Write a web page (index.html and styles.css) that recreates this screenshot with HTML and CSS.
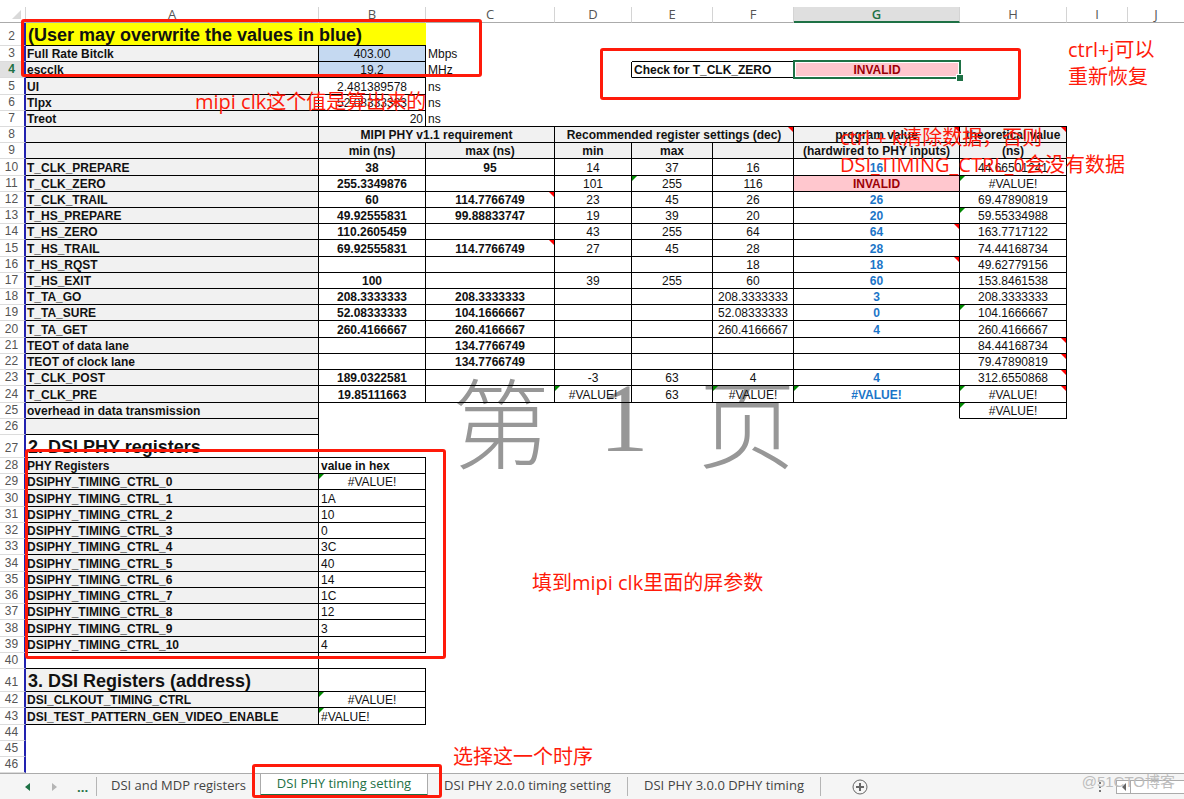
FILE: index.html
```html
<!DOCTYPE html>
<html lang="zh-CN">
<head>
<meta charset="utf-8">
<title>DSI PHY timing setting</title>
<link rel="stylesheet" href="styles.css">
</head>
<body>
<main class="sheet">
<div class="watermark"><span>第</span><span class="num">1</span><span>页</span></div>
<table class="cells">
<colgroup><col class="c-n"><col class="c-a"><col class="c-b"><col class="c-c"><col class="c-d"><col class="c-e"><col class="c-e"><col class="c-g"><col class="c-b"><col class="c-i"><col></colgroup>
<thead>
<tr><th class="corner"></th><th>A</th><th>B</th><th>C</th><th>D</th><th>E</th><th>F</th><th class="picked">G</th><th>H</th><th>I</th><th class="last">J</th></tr>
</thead>
<tbody>
<tr class="big"><th>2</th><td class="title yellow bt" colspan="2">(User may overwrite the values in blue)</td></tr>
<tr><th>3</th><td class="l rb">Full Rate Bitclk</td><td class="blue rb">403.00</td><td class="left">Mbps</td><td></td><td class="bt"></td><td class="bt"></td></tr>
<tr><th class="picked">4</th><td class="l rb">escclk</td><td class="blue rb">19.2</td><td class="left">MHz</td><td class="r"></td><td class="left b rb" colspan="2">Check for T_CLK_ZERO</td><td class="bad selected">INVALID</td></tr>
<tr class="tall"><th>5</th><td class="l rb">UI</td><td class="rb">2.481389578</td><td class="left">ns</td></tr>
<tr><th>6</th><td class="l rb">Tlpx</td><td class="rb">52.08333333</td><td class="left">ns</td></tr>
<tr><th>7</th><td class="l rb">Treot</td><td class="right rb">20</td><td class="left bt">ns</td><td class="bt"></td><td class="bt"></td><td class="bt"></td><td class="bt"></td><td class="bt"></td></tr>
<tr class="grid head"><th>8</th><td></td><td colspan="2">MIPI PHY v1.1 requirement</td><td class="note" colspan="3">Recommended register settings (dec)</td><td class="note">program value</td><td class="note">theoretical value</td></tr>
<tr class="grid head"><th>9</th><td></td><td>min (ns)</td><td>max (ns)</td><td>min</td><td>max</td><td></td><td>(hardwired to PHY inputs)</td><td>(ns)</td></tr>
<tr class="grid tall"><th>10</th><td class="l">T_CLK_PREPARE</td><td class="b">38</td><td class="b">95</td><td>14</td><td>37</td><td>16</td><td class="prog">16</td><td>44.66501241</td></tr>
<tr class="grid"><th>11</th><td class="l">T_CLK_ZERO</td><td class="b">255.3349876</td><td></td><td>101</td><td class="err">255</td><td>116</td><td class="bad">INVALID</td><td class="err">#VALUE!</td></tr>
<tr class="grid"><th>12</th><td class="l">T_CLK_TRAIL</td><td class="b">60</td><td class="b note">114.7766749</td><td>23</td><td>45</td><td>26</td><td class="prog">26</td><td>69.47890819</td></tr>
<tr class="grid"><th>13</th><td class="l">T_HS_PREPARE</td><td class="b">49.92555831</td><td class="b">99.88833747</td><td>19</td><td>39</td><td>20</td><td class="prog">20</td><td class="err">59.55334988</td></tr>
<tr class="grid"><th>14</th><td class="l">T_HS_ZERO</td><td class="b">110.2605459</td><td></td><td>43</td><td>255</td><td>64</td><td class="prog note">64</td><td>163.7717122</td></tr>
<tr class="grid tall"><th>15</th><td class="l">T_HS_TRAIL</td><td class="b">69.92555831</td><td class="b note">114.7766749</td><td>27</td><td>45</td><td>28</td><td class="prog">28</td><td>74.44168734</td></tr>
<tr class="grid"><th>16</th><td class="l">T_HS_RQST</td><td></td><td></td><td></td><td></td><td>18</td><td class="prog note">18</td><td>49.62779156</td></tr>
<tr class="grid"><th>17</th><td class="l">T_HS_EXIT</td><td class="b">100</td><td></td><td>39</td><td>255</td><td>60</td><td class="prog">60</td><td>153.8461538</td></tr>
<tr class="grid"><th>18</th><td class="l">T_TA_GO</td><td class="b">208.3333333</td><td class="b">208.3333333</td><td></td><td></td><td>208.3333333</td><td class="prog">3</td><td>208.3333333</td></tr>
<tr class="grid"><th>19</th><td class="l">T_TA_SURE</td><td class="b">52.08333333</td><td class="b">104.1666667</td><td></td><td></td><td>52.08333333</td><td class="prog">0</td><td class="err">104.1666667</td></tr>
<tr class="grid tall"><th>20</th><td class="l">T_TA_GET</td><td class="b">260.4166667</td><td class="b">260.4166667</td><td></td><td></td><td>260.4166667</td><td class="prog">4</td><td>260.4166667</td></tr>
<tr class="grid"><th>21</th><td class="l">TEOT of data lane</td><td></td><td class="b">134.7766749</td><td></td><td></td><td></td><td></td><td class="note">84.44168734</td></tr>
<tr class="grid"><th>22</th><td class="l">TEOT of clock lane</td><td></td><td class="b">134.7766749</td><td></td><td></td><td></td><td></td><td class="note">79.47890819</td></tr>
<tr class="grid"><th>23</th><td class="l">T_CLK_POST</td><td class="b">189.0322581</td><td></td><td>-3</td><td>63</td><td>4</td><td class="prog">4</td><td class="note">312.6550868</td></tr>
<tr class="grid tall"><th>24</th><td class="l">T_CLK_PRE</td><td class="b">19.85111663</td><td></td><td class="err">#VALUE!</td><td>63</td><td class="err">#VALUE!</td><td class="prog err">#VALUE!</td><td class="err note">#VALUE!</td></tr>
<tr><th>25</th><td class="l rb">overhead in data transmission</td><td></td><td></td><td></td><td></td><td></td><td class="r"></td><td class="err rb">#VALUE!</td></tr>
<tr><th>26</th><td class="l rb"></td></tr>
<tr class="big"><th>27</th><td class="title rb">2. DSI PHY registers</td><td class="bt"></td></tr>
<tr class="grid"><th>28</th><td class="l">PHY Registers</td><td class="b left">value in hex</td></tr>
<tr class="grid"><th>29</th><td class="l">DSIPHY_TIMING_CTRL_0</td><td class="err">#VALUE!</td></tr>
<tr class="grid tall"><th>30</th><td class="l">DSIPHY_TIMING_CTRL_1</td><td class="left">1A</td></tr>
<tr class="grid"><th>31</th><td class="l">DSIPHY_TIMING_CTRL_2</td><td class="left">10</td></tr>
<tr class="grid"><th>32</th><td class="l">DSIPHY_TIMING_CTRL_3</td><td class="left">0</td></tr>
<tr class="grid"><th>33</th><td class="l">DSIPHY_TIMING_CTRL_4</td><td class="left">3C</td></tr>
<tr class="grid tall"><th>34</th><td class="l">DSIPHY_TIMING_CTRL_5</td><td class="left">40</td></tr>
<tr class="grid"><th>35</th><td class="l">DSIPHY_TIMING_CTRL_6</td><td class="left">14</td></tr>
<tr class="grid"><th>36</th><td class="l">DSIPHY_TIMING_CTRL_7</td><td class="left">1C</td></tr>
<tr class="grid"><th>37</th><td class="l">DSIPHY_TIMING_CTRL_8</td><td class="left">12</td></tr>
<tr class="grid tall"><th>38</th><td class="l">DSIPHY_TIMING_CTRL_9</td><td class="left">3</td></tr>
<tr class="grid"><th>39</th><td class="l">DSIPHY_TIMING_CTRL_10</td><td class="left">4</td></tr>
<tr><th>40</th><td class="rb"></td><td class="bt"></td></tr>
<tr class="grid big"><th>41</th><td class="l title">3. DSI Registers (address)</td><td></td></tr>
<tr class="grid"><th>42</th><td class="l">DSI_CLKOUT_TIMING_CTRL</td><td class="err">#VALUE!</td></tr>
<tr class="grid tall"><th>43</th><td class="l">DSI_TEST_PATTERN_GEN_VIDEO_ENABLE</td><td class="left err">#VALUE!</td></tr>
<tr><th>44</th><td></td></tr>
<tr><th>45</th><td></td></tr>
<tr><th>46</th><td></td></tr>
</tbody>
</table>
</main>
<nav class="tabs">
<div class="scrollers">
<button type="button" aria-label="Previous sheet"><svg width="5" height="8" viewBox="0 0 5 8"><path d="M5 0v8L0 4z" fill="#1e7145"/></svg></button>
<button type="button" aria-label="Next sheet"><svg width="5" height="8" viewBox="0 0 5 8"><path d="M0 0v8l5-4z" fill="#b5b5b5"/></svg></button>
<button type="button" class="more">...</button>
</div>
<button type="button" class="tab first">DSI and MDP registers</button>
<button type="button" class="tab active">DSI PHY timing setting</button>
<button type="button" class="tab second">DSI PHY 2.0.0 timing setting</button>
<button type="button" class="tab third">DSI PHY 3.0.0 DPHY timing</button>
<button type="button" class="add" aria-label="New sheet"><svg width="16" height="16" viewBox="0 0 16 16" fill="none" stroke="#666"><circle cx="8" cy="8" r="7"/><path d="M8 4v8M4 8h8" stroke-width="2"/></svg></button>
<div class="hscroll">
<svg class="grip" width="2" height="10" viewBox="0 0 2 10" fill="#777"><path d="M0 0h2v2H0zM0 4h2v2H0zM0 8h2v2H0z"/></svg>
<div class="track"><button type="button" aria-label="Scroll left"><svg width="4" height="8" viewBox="0 0 4 8"><path d="M4 0v8L0 4z" fill="#666"/></svg></button></div>
</div>
</nav>
<div class="box box-input"></div>
<div class="box box-check"></div>
<div class="box box-regs"></div>
<div class="box box-tab"></div>
<p class="mark mark-clk">mipi clk这个值是算出来的</p>
<p class="mark mark-restore">ctrl+j可以<br>重新恢复</p>
<p class="mark mark-clear">ctrl + k清除数据，否则<br>DSI_TIMING_CTRL_0会没有数据</p>
<p class="mark mark-fill">填到mipi clk里面的屏参数</p>
<p class="mark mark-pick">选择这一个时序</p>
<p class="credit">@51CTO博客</p>
</body>
</html>
```
FILE: styles.css
```css
* { box-sizing: border-box; }
body {
  position: relative;
  display: flex;
  flex-direction: column;
  min-height: 100vh;
  margin: 0;
  overflow-x: hidden;
  background: #fff;
  color: #111;
  font: 12px/15px "Liberation Sans", Arial, sans-serif;
}
button { padding: 0; border: 0; background: none; font: inherit; color: inherit; }
svg { display: block; }

.sheet { position: relative; flex: 1; padding-top: 7px; }
.cells { position: relative; width: 100%; table-layout: fixed; border-collapse: separate; border-spacing: 0; }
.c-n { width: 26px; }
.c-a { width: 293px; }
.c-b { width: 107px; }
.c-c { width: 129px; }
.c-d { width: 77px; }
.c-e { width: 81px; }
.c-g { width: 166px; }
.c-i { width: 61px; }

.cells tr { height: 16px; }
.cells tr.tall { height: 17px; }
.cells tr.big { height: 23px; }
.cells th, .cells td { position: relative; padding: 0; text-align: center; white-space: nowrap; vertical-align: middle; }
.cells td { padding-top: 2px; border-bottom: 1px solid transparent; line-height: 13px; }
.cells th { color: #555; font-weight: 400; }
.cells thead th { border-right: 1px solid #d4d4d4; border-bottom: 1px solid #ababab; font: 13px/15px "Open Sans", sans-serif; }
.cells thead th.last { border-right: 0; }
.cells tbody th { padding-right: 1px; border-right: 2px solid #2222b0; border-bottom: 1px solid #dcdcdc; }
.cells tr.big th { vertical-align: bottom; line-height: 17px; }
.cells thead th.picked { border-bottom: 2px solid #1e7145; background: #dfdfdf; color: #1e7145; font-weight: 600; line-height: 14px; }
.cells tbody th.picked { background: #e1e1e1; color: #1e7145; font-weight: 700; }
.corner::after {
  content: "";
  position: absolute;
  right: 4px;
  bottom: 3px;
  border-left: 9px solid transparent;
  border-bottom: 9px solid #d9d9d9;
}

.cells .rb, .cells .grid td { border-right: 1px solid #000; border-bottom: 1px solid #000; }
.cells .r { border-right: 1px solid #000; }
.cells .bt { border-bottom: 1px solid #000; }
.cells .l { padding-left: 1px; background: #f1f1f1; font-weight: 700; text-align: left; }
.cells .left { padding-left: 2px; text-align: left; }
.cells .right { padding-right: 2px; text-align: right; }
.b, .head td { font-weight: 700; }
.head td { background: #f1f1f1; }
.cells .title { padding-left: 2px; font-size: 18px; font-weight: 700; line-height: 20px; text-align: left; }
.yellow { background: #ff0; }
.blue { background: #c5d9f1; }
.prog { color: #1b75c8; font-weight: 700; }
.bad { background: #ffc7ce; color: #9c0006; font-weight: 700; }
.note::after {
  content: "";
  position: absolute;
  top: 0;
  right: 0;
  border-top: 5px solid #f00;
  border-left: 5px solid transparent;
}
.err::before {
  content: "";
  position: absolute;
  top: 0;
  left: 0;
  border-top: 5px solid #080;
  border-right: 5px solid transparent;
}
.selected::before {
  content: "";
  position: absolute;
  inset: -2px -1px;
  border: 2px solid #1e7145;
  box-shadow: inset 0 0 0 1px #fff;
}
.selected::after {
  content: "";
  position: absolute;
  right: -3px;
  bottom: -4px;
  width: 6px;
  height: 6px;
  border: 1px solid #fff;
  border-width: 1px 0 0 1px;
  background: #1e7145;
}

.watermark {
  position: absolute;
  top: 358px;
  left: 452px;
  display: flex;
  justify-content: space-between;
  width: 344px;
  color: #979797;
  font: 300 98px/120px "Noto Sans CJK SC", sans-serif;
}
.num { font-family: "Liberation Serif", serif; }

.tabs {
  display: flex;
  align-items: stretch;
  height: 26px;
  border-top: 1px solid #ababab;
  background: #f5f5f5;
  color: #444;
  font: 13px/22px "Open Sans", "Noto Sans", sans-serif;
}
.scrollers { display: flex; align-items: center; gap: 22px; width: 97px; margin: 3px 0; padding-left: 25px; border-right: 1px solid #b5b5b5; }
.more { margin-left: -2px; color: #1e7145; font-weight: 700; }
.tab { padding-bottom: 4px; line-height: 16px; }
.first { width: 163px; margin: 3px 0; }
.active { width: 168px; margin-bottom: 3px; padding-bottom: 2px; border: 1px solid #ababab; border-width: 0 1px 2px; border-bottom-color: #1e7145; background: #fff; color: #1e7145; }
.second { width: 200px; margin: 3px 0; border-right: 1px solid #b5b5b5; }
.third { width: 193px; margin: 3px 0; border-right: 1px solid #b5b5b5; }
.add { display: flex; align-items: center; margin-left: 31px; }
.hscroll { display: flex; align-items: center; gap: 15px; margin-left: auto; }
.track { width: 68px; height: 14px; border: 1px solid #ababab; border-right: 0; background: #fff; }
.track button { display: flex; align-items: center; justify-content: center; width: 14px; height: 12px; border-right: 1px solid #ababab; }

.box { position: absolute; border: 3px solid #ff1a0a; border-radius: 3px; pointer-events: none; }
.box-input { top: 19px; left: 21px; width: 461px; height: 58px; }
.box-check { top: 48px; left: 600px; width: 421px; height: 52px; }
.box-regs { top: 449px; left: 25px; width: 421px; height: 210px; }
.box-tab { top: 764px; left: 252px; width: 190px; height: 34px; }
.mark { position: absolute; margin: 0; color: #ff1a0a; font: 400 20px/27px "Open Sans", "Noto Sans CJK SC", sans-serif; white-space: nowrap; }
.mark-clk { top: 88px; left: 195px; }
.mark-restore { top: 36px; left: 1068px; }
.mark-clear { top: 124px; left: 840px; }
.mark-fill { top: 569px; left: 532px; }
.mark-pick { top: 743px; left: 453px; }
.credit { position: absolute; top: 773px; right: 9px; margin: 0; color: #bdbdbd; font: 15px/18px "Liberation Sans", "Noto Sans CJK SC", sans-serif; }
```
